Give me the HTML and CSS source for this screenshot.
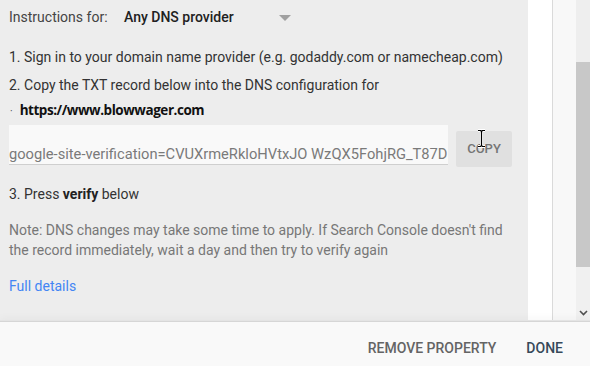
FILE: index.html
```html
<!DOCTYPE html>
<html>
<head>
<meta charset="utf-8">
<link rel="stylesheet" href="styles.css">
</head>
<body>
<div class="page">
  <div class="top">
    <div class="content">
      <div class="instr">
        <span class="instr-label">Instructions for:</span>
        <div class="select">
          <span class="select-value">Any DNS provider</span>
          <span class="caret"></span>
        </div>
      </div>
      <p class="line step1">1. Sign in to your domain name provider (e.g. godaddy.com or namecheap.com)</p>
      <p class="line step2">2. Copy the TXT record below into the DNS configuration for</p>
      <p class="url"><span class="dot">·</span><span class="url-text">https://www.blowwager.com</span></p>
      <div class="field-row">
        <div class="field"><span class="field-text">google-site-verification=CVUXrmeRkloHVtxJO WzQX5FohjRG_T87D</span></div>
        <div class="copy">COPY
          <svg class="ibeam" width="9" height="19" viewBox="0 0 9 19"><path d="M1 1.5h2.5l1 1 1-1H8M4.5 2.5v14M1 17.5h2.5l1-1 1 1H8" fill="none" stroke="#fff" stroke-width="3"/><path d="M1 1.5h2.5l1 1 1-1H8M4.5 2.5v14M1 17.5h2.5l1-1 1 1H8" fill="none" stroke="#000" stroke-width="1.2"/></svg>
        </div>
      </div>
      <p class="line step3">3. Press <b>verify</b> below</p>
      <p class="line note">Note: DNS changes may take some time to apply. If Search Console doesn't find the record immediately, wait a day and then try to verify again</p>
      <a class="line details" href="#">Full details</a>
    </div>
    <div class="gutter"></div>
    <div class="sep"></div>
    <div class="track"></div>
    <div class="scroll">
      <div class="thumb"></div>
      <div class="scroll-rest">
        <svg class="chev" width="9" height="6" viewBox="0 0 9 6"><path d="M1 1l3.5 3.5L8 1" fill="none" stroke="#505050" stroke-width="1.6"/></svg>
      </div>
    </div>
  </div>
  <div class="footer">
    <span class="btn remove">REMOVE PROPERTY</span>
    <span class="btn done">DONE</span>
  </div>
</div>
</body>
</html>
```
FILE: styles.css
```css
html, body {
  margin: 0;
  padding: 0;
}
body {
  width: 590px;
  height: 366px;
  overflow: hidden;
  font-family: Roboto, "Liberation Sans", sans-serif;
  font-size: 14px;
  line-height: 20px;
  color: #333;
}
.page {
  display: flex;
  flex-direction: column;
  height: 366px;
}
.top {
  display: flex;
  height: 321px;
}
.content {
  width: 528px;
  box-sizing: border-box;
  padding: 7px 0 0 9px;
  background: #ededed;
  display: flex;
  flex-direction: column;
  align-items: flex-start;
}
.instr {
  display: flex;
  align-items: center;
  height: 20px;
}
.instr-label {
  color: #444;
  width: 115px;
}
.select {
  display: flex;
  align-items: center;
  width: 167px;
  justify-content: space-between;
}
.select-value {
  font-weight: 500;
  color: #212121;
}
.caret {
  width: 0;
  height: 0;
  border-left: 6px solid transparent;
  border-right: 6px solid transparent;
  border-top: 6px solid #a0a0a0;
  margin-top: 1px;
}
p {
  margin: 0;
}
.line {
  height: 20px;
}
.step1 { margin-top: 20px; }
.step2 { margin-top: 8px; }
.url {
  margin-top: 5px;
  height: 20px;
  display: flex;
  align-items: baseline;
}
.url-text {
  font-family: "Open Sans", "DejaVu Sans", sans-serif;
  font-weight: 700;
  font-size: 13.5px;
  letter-spacing: -0.45px;
  color: #111;
  margin-left: 7px;
}
.dot {
  font-size: 10px;
  color: #444;
  margin-left: 1px;
}
.field-row {
  margin-top: 5px;
  display: flex;
  align-items: flex-start;
  gap: 8px;
}
.field {
  width: 439px;
  height: 39px;
  background: #f9f9f9;
  border-bottom: 1px solid #cfcfcf;
  overflow: hidden;
  white-space: nowrap;
  display: flex;
  align-items: flex-end;
}
.field-text {
  font-size: 14.7px;
  line-height: 19px;
  color: #7a7a7a;
}
.copy {
  position: relative;
  margin-top: 6px;
  width: 56px;
  height: 36px;
  border-radius: 2px;
  background: #e0e0e0;
  color: #757575;
  font-size: 13px;
  font-weight: 500;
  display: flex;
  align-items: center;
  justify-content: center;
}
.ibeam {
  position: absolute;
  left: 21px;
  top: -2px;
}
.step3 { margin-top: 17px; }
.step3 b { font-weight: 700; color: #222; }
.note {
  margin-top: 16px;
  height: 40px;
  color: #777;
  width: 505px;
}
.details {
  margin-top: 16px;
  color: #4285f4;
  text-decoration: none;
}
.gutter {
  width: 24px;
  background: #fff;
}
.sep {
  width: 1px;
  background: #dadada;
}
.track {
  width: 23px;
  background: #f8f8f8;
}
.scroll {
  flex: 1;
  display: flex;
  flex-direction: column;
  background: #eeeeee;
  padding-top: 62px;
}
.thumb {
  height: 205px;
  background: #c8c8c8;
}
.scroll-rest {
  flex: 1;
  display: flex;
  flex-direction: column;
  justify-content: flex-end;
  align-items: center;
  padding-bottom: 5px;
  background: #f0f0f0;
}
.footer {
  flex: 1;
  background: #f9f9f9;
  border-top: 1px solid #d6d6d6;
  box-shadow: 0 -1px 0 #e4e4e4, 0 -3px 8px rgba(0,0,0,0.035);
  display: flex;
  justify-content: flex-end;
  align-items: flex-start;
  padding: 16px 27px 0 0;
  gap: 30px;
  position: relative;
}
.btn {
  font-weight: 500;
  font-size: 14px;
  line-height: 20px;
}
.remove { color: #646464; }
.done { color: #36495a; }
```
